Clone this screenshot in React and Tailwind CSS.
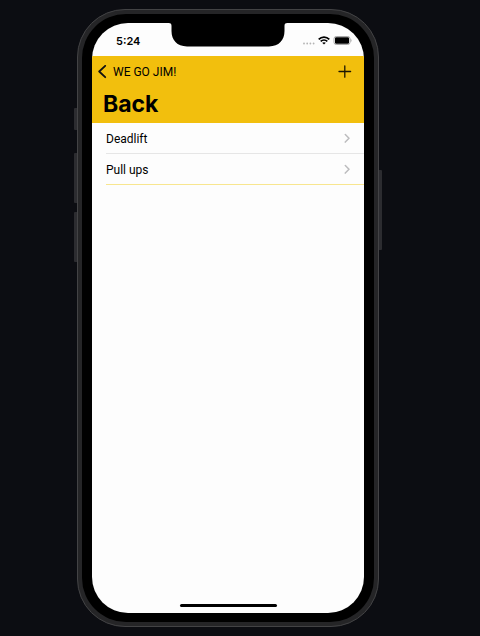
const exercises = ["Deadlift", "Pull ups"];

function StatusBar() {
  return (
    <div className="flex h-[33px] shrink-0 items-center justify-between pt-[2px] pr-[12px] pl-[24px]">
      <span className="text-[11px] leading-[14px] font-semibold">5:24</span>
      <div className="flex items-center gap-[3px]">
        <svg width="13" height="10" viewBox="0 0 13 10" fill="#b4b4b4" aria-hidden="true">
          <circle cx="2" cy="7.5" r="0.9" />
          <circle cx="5.2" cy="7.5" r="0.9" />
          <circle cx="8.4" cy="7.5" r="0.9" />
          <circle cx="11.6" cy="7.5" r="0.9" />
        </svg>
        <svg width="12" height="9" viewBox="0 0 12 9" fill="none" stroke="#000" strokeWidth="1.7" aria-hidden="true">
          <path d="M0.7 3.4C3.7 0.3 8.3 0.3 11.3 3.4" />
          <path d="M2.7 5.4C4.6 3.5 7.4 3.5 9.3 5.4" />
          <path d="M6 8.6L4.2 6.8C5.2 5.9 6.8 5.9 7.8 6.8Z" fill="#000" stroke="none" />
        </svg>
        <svg width="19" height="9" viewBox="0 0 19 9" aria-hidden="true">
          <rect x="1" y="0.5" width="16" height="8" rx="2.2" fill="#fff" stroke="#a8a8a8" />
          <rect x="2" y="1.2" width="14" height="6.6" rx="1.2" fill="#000" />
          <path d="M17.6 3C18.9 3.4 18.9 5.6 17.6 6Z" fill="#a0a0a0" />
        </svg>
      </div>
    </div>
  );
}

function Header() {
  return (
    <header className="h-[67px] shrink-0 bg-[#f2bf0d]">
      <div className="flex h-[31px] items-center justify-between pr-[12px] pl-[6px]">
        <button type="button" className="flex items-center gap-[6px] font-['Roboto','Liberation_Sans',sans-serif] text-[12px] leading-[16px]">
          <svg width="9" height="14" viewBox="0 0 9 14" fill="none" stroke="#111" strokeWidth="1.8" strokeLinecap="round" strokeLinejoin="round" aria-hidden="true">
            <path d="M7.2 0.8L1.2 6.5L7.2 12.2" />
          </svg>
          WE GO JIM!
        </button>
        <button type="button" aria-label="Add exercise">
          <svg width="14" height="14" viewBox="0 0 14 14" fill="none" stroke="#1c1703" strokeWidth="1.3" strokeLinecap="round" aria-hidden="true">
            <path d="M6.8 0.8V12.2M1 6.5H12.6" />
          </svg>
        </button>
      </div>
      <h1 className="pl-[11px] text-[23px] leading-[34px] font-bold">Back</h1>
    </header>
  );
}

function ExerciseList() {
  return (
    <ul className="flex-1 pl-[14px]">
      {exercises.map((name) => (
        <li key={name} className="border-b border-[#e6e6e6] last:border-[#f8e68f]">
          <button type="button" className="flex h-[30px] w-full items-center justify-between pr-[13px] font-['Roboto','Liberation_Sans',sans-serif] text-[12px] leading-[16px]">
            <span className="pt-[2px]">{name}</span>
            <svg width="7" height="10" viewBox="0 0 7 10" fill="none" stroke="#bdbdbf" strokeWidth="1.5" strokeLinecap="round" strokeLinejoin="round" aria-hidden="true">
              <path d="M1.3 1.5L5 5.3L1.3 9.1" />
            </svg>
          </button>
        </li>
      ))}
    </ul>
  );
}

export default function App() {
  return (
    <main className="flex min-h-screen justify-center bg-[#0c0d12] py-[9px] pr-6 font-['Inter','Liberation_Sans',sans-serif] text-black">
      <div className="relative flex w-full max-w-[302px] rounded-[48px] border border-[#434345] bg-[#252527] p-[4px]">
        <span className="absolute top-[98px] -left-[4px] h-[22px] w-[3px] rounded-l-[1px] bg-[#2c2c30]" />
        <span className="absolute top-[143px] -left-[4px] h-[50px] w-[3px] rounded-l-[1px] bg-[#2c2c30]" />
        <span className="absolute top-[202px] -left-[4px] h-[50px] w-[3px] rounded-l-[1px] bg-[#2c2c30]" />
        <span className="absolute top-[160px] -right-[4px] h-[80px] w-[3px] rounded-r-[1px] bg-[#2c2c30]" />
        <div className="flex w-full rounded-[44px] bg-black px-[10px] py-[9px]">
          <div className="relative flex w-full flex-col overflow-hidden rounded-[36px] bg-[#fdfdfd]">
            <svg className="absolute top-0 left-1/2 -translate-x-1/2" width="120" height="24" viewBox="0 0 120 24" aria-hidden="true">
              <path d="M0.5 0H119.5C117 0 116.5 1 116.5 3V8C116.5 17 111 23.4 101 23.4H19C9 23.4 3.5 17 3.5 8V3C3.5 1 3 0 0.5 0Z" fill="#000" />
            </svg>
            <StatusBar />
            <Header />
            <ExerciseList />
            <div className="mx-auto mb-[6px] h-[3px] w-[97px] shrink-0 rounded-full bg-black" />
          </div>
        </div>
      </div>
    </main>
  );
}
